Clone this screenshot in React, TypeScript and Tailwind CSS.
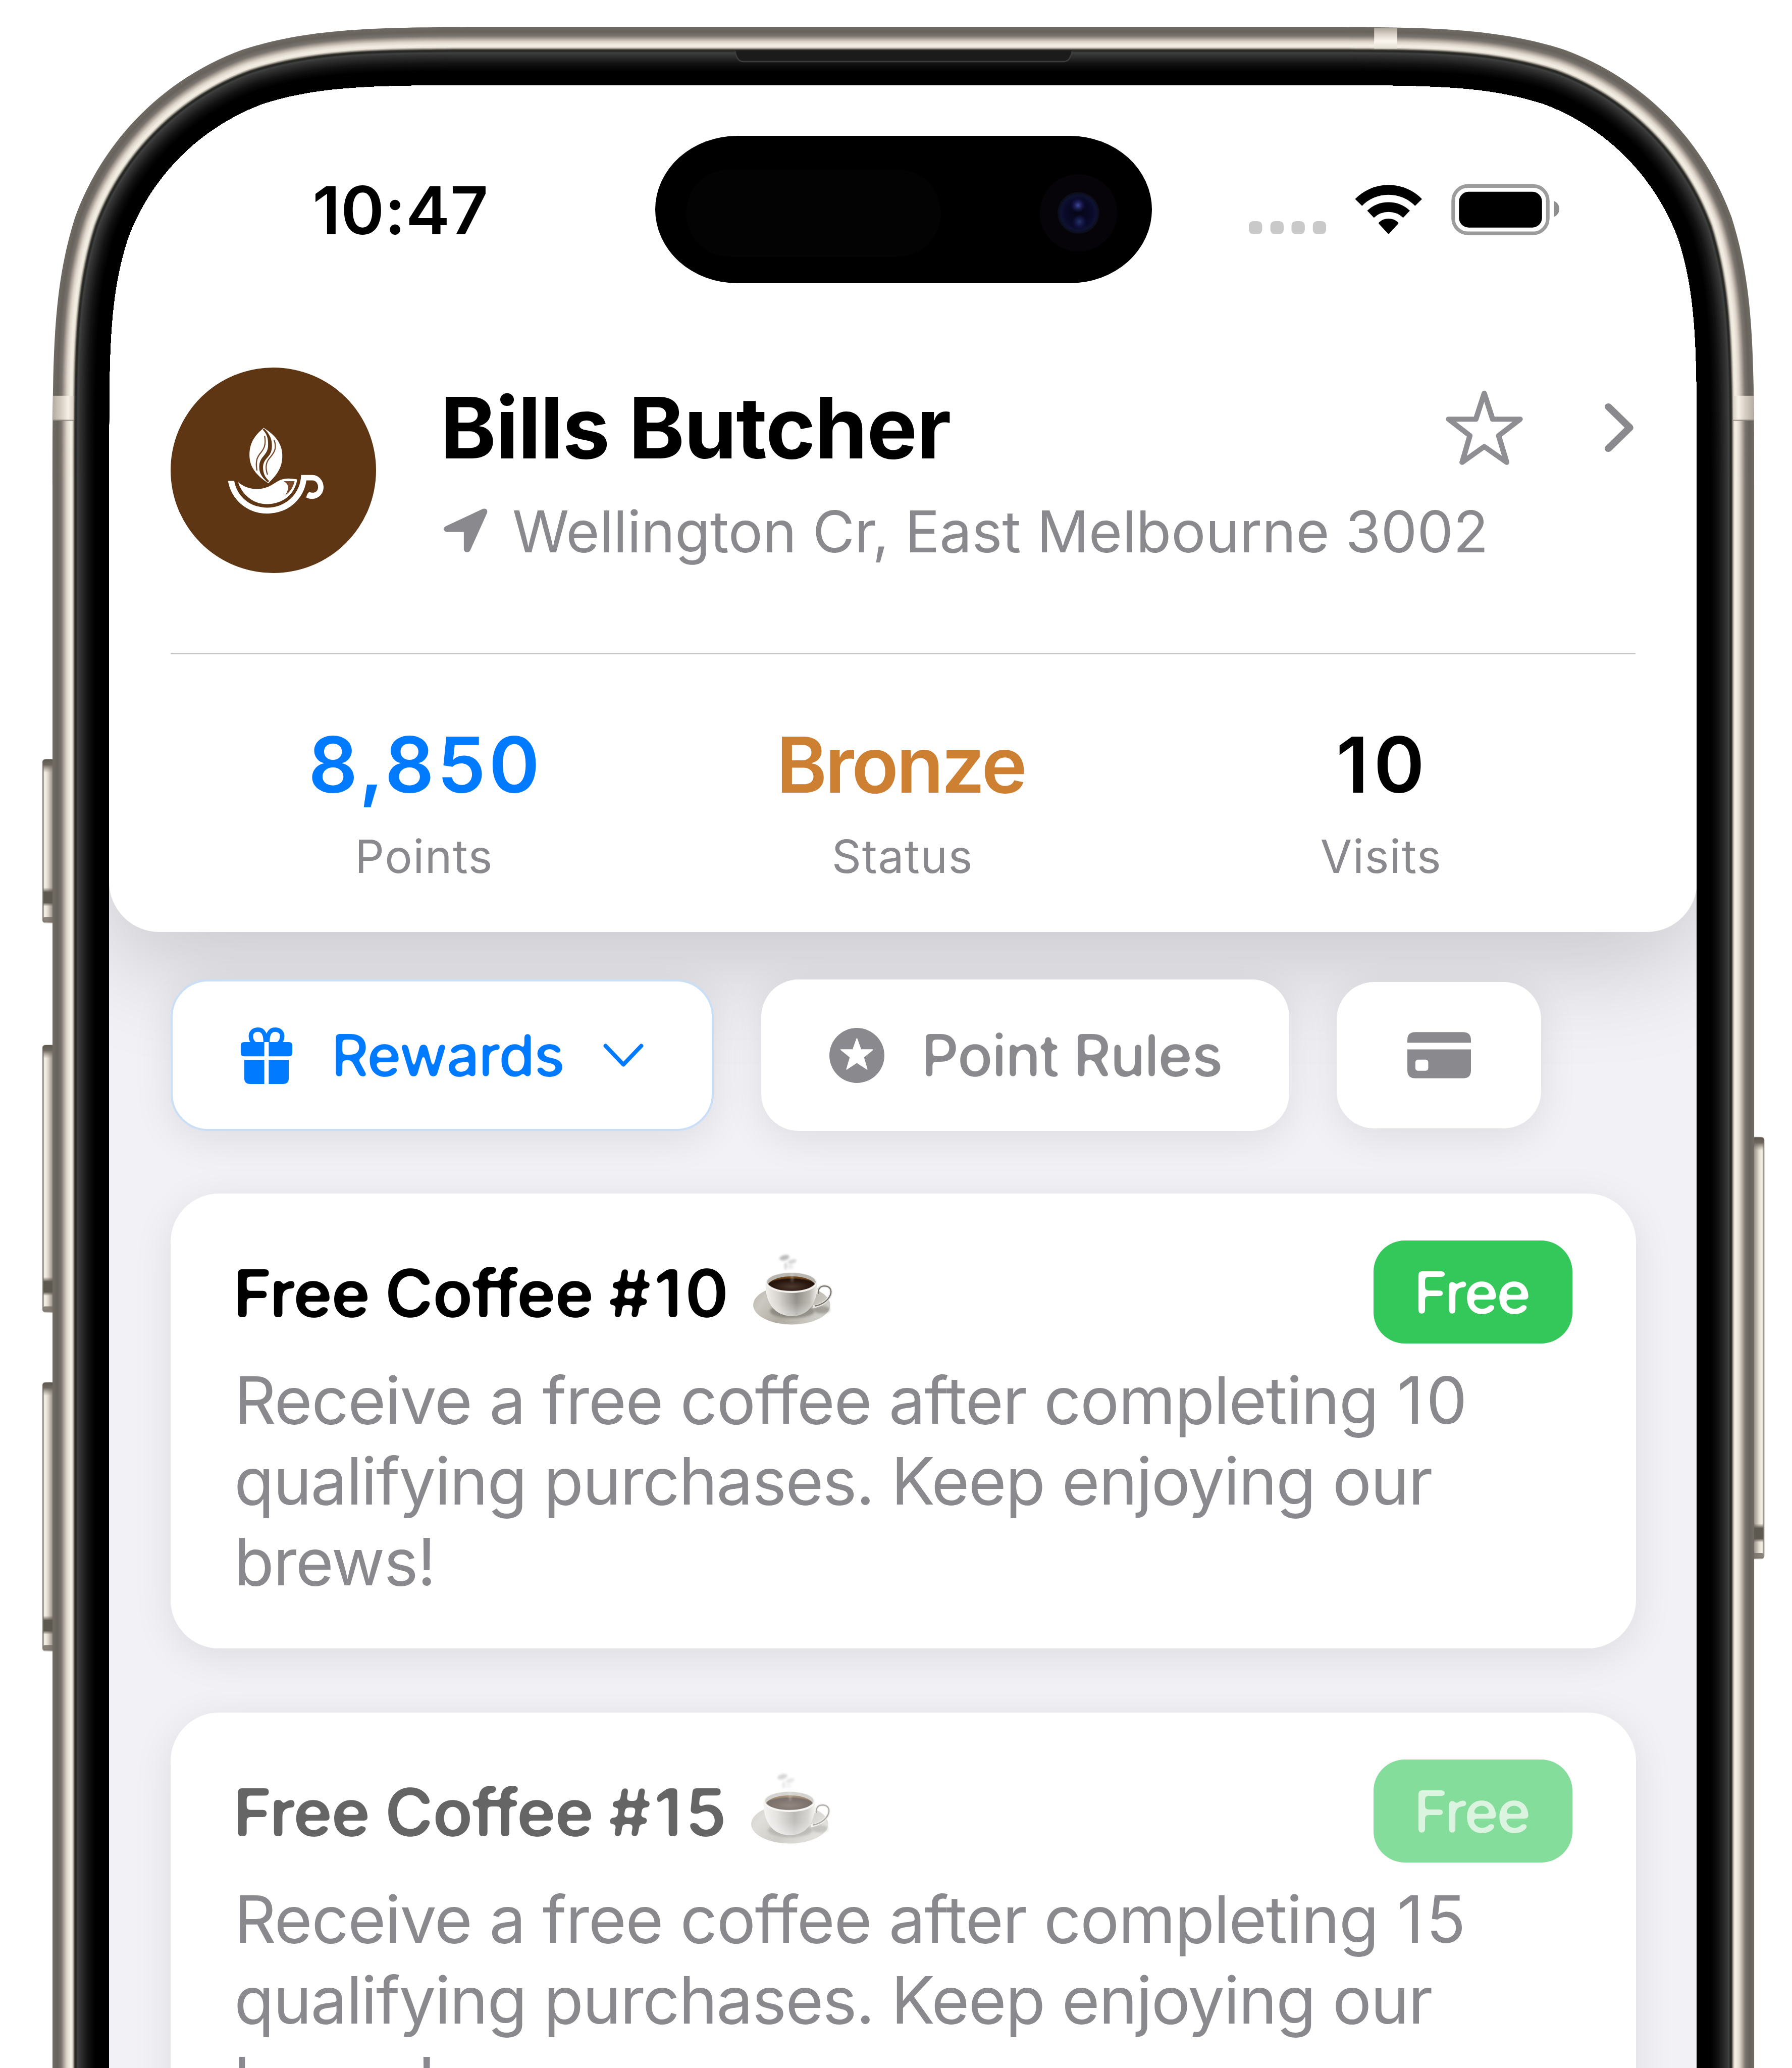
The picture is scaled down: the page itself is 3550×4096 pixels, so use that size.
import React from "react";

type Box = { l: number; t: number; r: number };

/** Rounded-top outline with continuous corner curvature, open past the bottom edge. */
function shell({ l, t, r }: Box, rad: number) {
  const n = (v: number) => v.toFixed(2);
  const a = 1.528665 * rad, b = 1.08849 * rad, c = 0.86841 * rad, d = 0.63149 * rad;
  const e = 0.07491 * rad, f = 0.37282 * rad, g = 0.16906 * rad;
  return [
    `M${n(l)} 4800`,
    `V${n(t + a)}`,
    `C${n(l)} ${n(t + b)} ${n(l)} ${n(t + c)} ${n(l + e)} ${n(t + d)}`,
    `C${n(l + g)} ${n(t + f)} ${n(l + f)} ${n(t + g)} ${n(l + d)} ${n(t + e)}`,
    `C${n(l + c)} ${n(t)} ${n(l + b)} ${n(t)} ${n(l + a)} ${n(t)}`,
    `H${n(r - a)}`,
    `C${n(r - b)} ${n(t)} ${n(r - c)} ${n(t)} ${n(r - d)} ${n(t + e)}`,
    `C${n(r - f)} ${n(t + g)} ${n(r - g)} ${n(t + f)} ${n(r - e)} ${n(t + d)}`,
    `C${n(r)} ${n(t + c)} ${n(r)} ${n(t + b)} ${n(r)} ${n(t + a)}`,
    `V4800Z`,
  ].join(" ");
}

const OUTER: Box = { l: 118, t: 60.5, r: 3942 };
const INNER: Box = { l: 245, t: 191, r: 3813.5 };
const HOLE = shell(INNER, 550);

/** Colour stops across the rim, from the outside in (0..1). */
const STOPS: [number, number[]][] = [
  [0, [112, 107, 100]],
  [0.08, [104, 99, 92]],
  [0.15, [122, 116, 110]],
  [0.2, [176, 166, 157]],
  [0.25, [222, 213, 202]],
  [0.31, [243, 238, 228]],
  [0.345, [236, 230, 219]],
  [0.37, [150, 145, 136]],
  [0.39, [52, 51, 47]],
  [0.41, [36, 36, 33]],
  [0.44, [64, 66, 66]],
  [0.47, [54, 54, 54]],
  [0.54, [38, 38, 38]],
  [0.62, [20, 20, 20]],
  [0.7, [8, 8, 8]],
  [0.77, [0, 0, 0]],
  [1, [0, 0, 0]],
];

function tone(u: number) {
  let i = 0;
  while (i < STOPS.length - 2 && STOPS[i + 1][0] < u) i++;
  const [p, a] = STOPS[i];
  const [q, b] = STOPS[i + 1];
  const k = (u - p) / (q - p);
  return `rgb(${a.map((v, j) => Math.round(v + (b[j] - v) * k)).join(",")})`;
}

const mix = (a: number, b: number, u: number) => a + (b - a) * u;
const LAYERS = Array.from({ length: 101 }, (_, i) => {
  const u = i / 128;
  return {
    fill: tone(u),
    d: `${shell(
      { l: mix(OUTER.l, INNER.l, u), t: mix(OUTER.t, INNER.t, u), r: mix(OUTER.r, INNER.r, u) },
      mix(677, 550, u),
    )} ${HOLE}`,
  };
});

function SideButton({ x, y, h, flip }: { x: number; y: number; h: number; flip?: boolean }) {
  return (
    <g transform={flip ? `translate(${2 * x + 26} 0) scale(-1 1)` : undefined}>
      <rect x={x} y={y} width="30" height={h} rx="7" fill="url(#btnEdge)" />
      <rect x={x + 4} y={y + 5} width="20" height={h - 10} fill="url(#btnCore)" />
      <rect x={x + 1} y={y + 1} width="25" height="30" rx="6" fill="url(#btnCap)" />
      <rect x={x + 2} y={y + h - 80} width="24" height="42" fill="url(#btnNotch)" />
      <rect x={x + 2} y={y + h - 14} width="24" height="12" rx="4" fill="#756f67" opacity=".85" />
    </g>
  );
}

function Bezel() {
  return (
    <svg viewBox="0 0 4027 4646" className="pointer-events-none absolute inset-0 z-30 h-[4096px] w-[3550px]">
      <defs>
        <linearGradient id="btnEdge">
          <stop offset="0" stopColor="#8d8982" />
          <stop offset=".25" stopColor="#c9c3b9" />
          <stop offset="1" stopColor="#8a837b" />
        </linearGradient>
        <linearGradient id="btnCore">
          <stop offset="0" stopColor="#fbf7ef" />
          <stop offset=".4" stopColor="#e3dbd0" />
          <stop offset="1" stopColor="#958d84" />
        </linearGradient>
        <linearGradient id="btnCap" x1="0" y1="0" x2="0" y2="1">
          <stop offset="0" stopColor="#5d5850" />
          <stop offset=".4" stopColor="#6d675f" />
          <stop offset="1" stopColor="#8d867d" stopOpacity="0" />
        </linearGradient>
        <linearGradient id="btnNotch" x1="0" y1="0" x2="0" y2="1">
          <stop offset="0" stopColor="#5d5850" stopOpacity="0" />
          <stop offset=".25" stopColor="#5d5850" />
          <stop offset=".8" stopColor="#5d5850" />
          <stop offset="1" stopColor="#5d5850" stopOpacity="0" />
        </linearGradient>
        <linearGradient id="seam">
          <stop offset="0" stopColor="#b5aca2" />
          <stop offset=".4" stopColor="#d5ccc2" />
          <stop offset=".75" stopColor="#f6f1e7" />
          <stop offset="1" stopColor="#d9d3c8" />
        </linearGradient>
        <linearGradient id="seamTop" x1="0" y1="0" x2="0" y2="1">
          <stop offset="0" stopColor="#a9a096" />
          <stop offset=".3" stopColor="#d8cfc6" />
          <stop offset=".65" stopColor="#fbf6ee" />
          <stop offset="1" stopColor="#e5dfd4" />
        </linearGradient>
      </defs>
      <SideButton x={95} y={1705} h={369} />
      <SideButton x={95} y={2347} h={602} />
      <SideButton x={95} y={3105} h={605} />
      <SideButton x={3939} y={2554} h={949} flip />
      {LAYERS.map((p, i) => (
        <path key={i} d={p.d} fill={p.fill} fillRule="evenodd" />
      ))}
      <rect x="119" y="889" width="46" height="54" fill="url(#seam)" />
      <path d="M119 944H166" stroke="#8d867d" strokeWidth="2" />
      <rect x="-3941" y="889" width="46" height="54" fill="url(#seam)" transform="scale(-1 1)" />
      <path d="M3894 944H3941" stroke="#8d867d" strokeWidth="2" />
      <rect x="3088" y="62" width="52" height="47" fill="url(#seamTop)" />
      <path d="M1652 113Q1656 138 1670 138H2391Q2405 138 2409 113Z" fill="#1b1b1b" />
      <path d="M1652 115Q1656 138 1670 138H2391Q2405 138 2409 115" fill="none" stroke="#3c3c3c" strokeWidth="3" />
    </svg>
  );
}

/** Softens glyph corners so Inter reads as a rounded face. */
function RoundedFaceFilter() {
  return (
    <svg className="absolute size-0">
      <filter id="rounded" x="-5%" y="-10%" width="110%" height="120%" colorInterpolationFilters="sRGB">
        <feGaussianBlur stdDeviation="3.6" />
        <feComponentTransfer>
          <feFuncA type="linear" slope="9" intercept="-4" />
        </feComponentTransfer>
      </filter>
    </svg>
  );
}

function Island() {
  return (
    <svg viewBox="1472 305 1116 331" className="h-[292px] w-[984px]">
      <defs>
        <radialGradient id="lens">
          <stop offset="0" stopColor="#060614" />
          <stop offset=".65" stopColor="#09092a" />
          <stop offset=".85" stopColor="#0f1230" />
          <stop offset="1" stopColor="#0a0c14" />
        </radialGradient>
        <radialGradient id="glintA">
          <stop offset="0" stopColor="#414b9c" />
          <stop offset="1" stopColor="#1a1a60" stopOpacity="0" />
        </radialGradient>
        <radialGradient id="glintB">
          <stop offset="0" stopColor="#243668" />
          <stop offset="1" stopColor="#1a1a60" stopOpacity="0" />
        </radialGradient>
      </defs>
      <rect x="1472" y="305" width="1116" height="331" rx="184" ry="165.5" fill="#000" />
      <rect x="1541" y="380" width="573" height="197" rx="98" fill="#030303" />
      <circle cx="2423" cy="478" r="87" fill="#060408" />
      <circle cx="2423" cy="478" r="47" fill="url(#lens)" />
      <circle cx="2422" cy="461" r="17" fill="url(#glintA)" />
      <circle cx="2425" cy="498" r="17" fill="url(#glintB)" />
    </svg>
  );
}

function Signals() {
  return (
    <svg viewBox="2800 430 720 150" className="h-[132px] w-[635px]">
      {[2806, 2854.5, 2902, 2950].map((x) => (
        <rect key={x} x={x} y="531" width="30" height="29.500" rx="10" fill="#c9c9c9" />
      ))}
      <g fill="none" stroke="#000" strokeWidth="22">
        <path d="M3053 489A94.500 94.500 0 0 1 3188 489" />
        <path d="M3080 515.500A59 59 0 0 1 3161 515.500" />
      </g>
      <path d="M3099 537.500Q3097 535.500 3099 534A31 31 0 0 1 3142 534Q3144 535.500 3142 537.500L3122.500 558.500Q3120.500 560.500 3118.500 558.500Z" />
      <rect x="3266" y="452" width="213" height="106.500" rx="33" fill="none" stroke="#9c9c9c" strokeWidth="8" />
      <rect x="3279" y="465" width="187" height="80.500" rx="22" />
      <path d="M3493 486Q3505 491 3505 503.500Q3505 516 3493 521.500Z" fill="#8e8e8e" />
    </svg>
  );
}

function Logo() {
  return (
    <svg viewBox="70 75 1389 1389" className="mt-[1px] size-[407px] shrink-0">
      <circle cx="764.5" cy="769.5" r="694.5" fill="#5e3613" />
      <path d="M700 483C790 540 825 600 825 672C825 745 795 795 730 857C645 800 603 745 603 665C603 590 635 535 700 483Z" fill="#fff" />
      <path d="M692 494L702 487C745 530 756 565 755 605C754 690 695 680 695 752C695 790 710 820 736 842L727 852C690 820 668 790 669 745C671 672 729 670 729 600C730 555 722 525 692 494Z" fill="#5e3613" />
      <g fill="none" stroke="#7a4a2a" strokeWidth="8" strokeLinecap="round">
        <path d="M706 541C716 600 700 625 680 650C655 680 643 705 653 768" />
        <path d="M770 566C790 620 770 650 745 680C715 712 708 745 724 796" />
      </g>
      <path d="M458 841H500C520 950 610 1022 723 1022C850 1022 950 925 952 801H1030C1070 801 1104 840 1104 882C1104 930 1068 963 1025 963Q1005 963 987 954Q990 930 1007 915C1040 930 1067 915 1067 882C1067 858 1050 838 1030 838H988C970 965 865 1062 723 1062C590 1062 480 970 458 841Z" fill="#fff" />
      <path d="M526 850C600 910 690 910 765 862C820 825 850 818 926 832C910 930 830 998 723 998C630 998 555 940 526 850Z" fill="#fff" />
      <path d="M834 843H908C900 880 880 915 845 939C875 890 870 865 834 843Z" fill="#7a4a2a" />
    </svg>
  );
}

function Header() {
  return (
    <div className="flex h-[566px] px-[122px]">
      <Logo />
      <div className="ml-[130px] flex-1">
        <div className="flex items-center justify-between">
          <div className="mt-[18px] ml-[-3px] text-[168px] leading-[204px] font-bold tracking-[-1.4px]">Bills Butcher</div>
          <div className="mt-[18px] flex items-center gap-[160px] pr-[2px]">
            <svg viewBox="185 110 495 505" preserveAspectRatio="none" className="h-[149px] w-[155px]" fill="none" stroke="#8e8e93" strokeWidth="34" strokeLinejoin="round">
              <path d="M432 130L485 304H659L523 415L574 594L432 488L292 594L341 415L206 304H379Z" />
            </svg>
            <svg viewBox="1188 195 190 332" preserveAspectRatio="none" className="h-[98px] w-[60px]" fill="none" stroke="#8a8a8e" strokeWidth="46" strokeLinecap="round" strokeLinejoin="round">
              <path d="M1214 221L1348 361L1214 501" />
            </svg>
          </div>
        </div>
        <div className="mt-[34px] flex items-center text-[114px] leading-[140px] tracking-[-0.2px] text-[#8a8a8e]">
          <svg viewBox="110 126 299 299" className="mt-[-6px] mr-[49px] ml-[4px] size-[87px]">
            <path d="M377 129Q407 121 407 153L291 410Q284 424 268 424Q248 421 247 404V287H134Q112 285 111 266Q112 252 126 246Z" fill="#8a8a8e" />
          </svg>
          <span>Wellington Cr, East Melbourne 3002</span>
        </div>
      </div>
    </div>
  );
}

function Stat({ value, label, color }: { value: string; label: string; color: string }) {
  return (
    <div className="flex flex-1 flex-col items-center">
      <div className={`text-[153px] leading-[186px] font-semibold ${color}`}>{value}</div>
      <div className="mt-[32px] text-[91px] leading-[112px] tracking-[1.5px] text-[#8a8a8e]">{label}</div>
    </div>
  );
}

function Tabs() {
  return (
    <div className="relative z-20 mt-[94px] flex items-center gap-[94px] px-[122px] text-[116px] leading-[140px] font-medium">
      <div className="flex h-[300px] w-[1076px] items-center rounded-[74px] border-[4px] border-[#c9def7] bg-white pl-[134px] text-[#007aff] shadow-[0_16px_80px_rgba(0,0,0,0.09)]">
        <svg viewBox="0 0 118 128" className="h-[113px] w-[104px]" fill="#007aff">
          <path d="M57 34C57 18 52 6 40 6C20 6 20 28 32 38M61 34C61 18 66 6 78 6C98 6 98 28 86 38" fill="none" stroke="#007aff" strokeWidth="10" />
          <path d="M9 34H54V66H9Q1 66 1 58V42Q1 34 9 34ZM64 34H109Q117 34 117 42V58Q117 66 109 66H64ZM9 74H54V128H22Q9 128 9 115ZM64 74H109V115Q109 128 96 128H64Z" />
        </svg>
        <span className="ml-[76px] tracking-[-2.5px] filter-[url(#rounded)]">Rewards</span>
        <svg viewBox="0 0 90 52" className="ml-[78px] h-[46px] w-[80px]" fill="none" stroke="#007aff" strokeWidth="9" strokeLinecap="round" strokeLinejoin="round">
          <path d="M5 5L45 47L85 5" />
        </svg>
      </div>
      <div className="flex h-[300px] w-[1046px] items-center rounded-[74px] bg-white pl-[135px] text-[#8a8a8e] shadow-[0_16px_80px_rgba(0,0,0,0.09)]">
        <svg viewBox="0 0 124 124" className="size-[109px]">
          <circle cx="62" cy="62" r="62" fill="#8a8a8e" />
          <path d="M62 24L71 49H98L77 66L85 93L62 78L39 93L47 66L26 49H53Z" fill="#fff" stroke="#fff" strokeWidth="2" strokeLinejoin="round" />
        </svg>
        <span className="ml-[73px] tracking-[-2px] filter-[url(#rounded)]">Point Rules</span>
      </div>
      <div className="flex h-[290px] w-[405px] items-center justify-center rounded-[74px] bg-white shadow-[0_16px_80px_rgba(0,0,0,0.09)]">
        <svg viewBox="0 0 143 104" className="h-[92px] w-[126px]">
          <path d="M18 0H125Q143 0 143 18V24H0V18Q0 0 18 0ZM0 39H143V86Q143 104 125 104H18Q0 104 0 86Z" fill="#8a8a8e" />
          <rect x="18" y="62" width="29" height="25" rx="6" fill="#fff" />
        </svg>
      </div>
    </div>
  );
}

function Cup() {
  return (
    <svg viewBox="150 110 545 490" className="h-[144px] w-[160px]">
      <defs>
        <linearGradient id="plate" x1="0" y1="0" x2="1" y2=".4">
          <stop offset="0" stopColor="#b9b5ad" />
          <stop offset=".25" stopColor="#cbc8c1" />
          <stop offset=".6" stopColor="#b0aca2" />
          <stop offset="1" stopColor="#cfcdc8" />
        </linearGradient>
        <linearGradient id="body">
          <stop offset="0" stopColor="#f2f0ed" />
          <stop offset=".25" stopColor="#d2cec8" />
          <stop offset=".6" stopColor="#86827c" />
          <stop offset=".85" stopColor="#b5b1aa" />
          <stop offset="1" stopColor="#f1efec" />
        </linearGradient>
        <linearGradient id="bodyLight" x1="0" y1="0" x2="0" y2="1">
          <stop offset="0" stopColor="#fff" stopOpacity="0" />
          <stop offset=".6" stopColor="#fff" stopOpacity=".15" />
          <stop offset="1" stopColor="#fff" stopOpacity=".55" />
        </linearGradient>
        <radialGradient id="brew" cx=".5" cy=".7" r=".6">
          <stop offset="0" stopColor="#4e382d" />
          <stop offset=".6" stopColor="#2c1a12" />
          <stop offset=".85" stopColor="#24130b" />
          <stop offset="1" stopColor="#6b441c" />
        </radialGradient>
        <filter id="steam" x="-50%" y="-50%" width="200%" height="200%">
          <feGaussianBlur stdDeviation="8" />
        </filter>
        <filter id="soft" x="-20%" y="-50%" width="140%" height="200%">
          <feGaussianBlur stdDeviation="8" />
        </filter>
      </defs>
      <ellipse cx="417" cy="463" rx="260" ry="132" fill="url(#plate)" />
      <ellipse cx="420" cy="505" rx="150" ry="46" fill="#6d6a62" opacity=".55" filter="url(#soft)" />
      <ellipse cx="620" cy="495" rx="55" ry="26" fill="#6d6a62" opacity=".45" filter="url(#soft)" />
      <path d="M590 390C590 350 610 335 640 335C675 335 690 365 678 395C662 435 620 465 560 475" fill="none" stroke="#e9e7e3" strokeWidth="20" />
      <path d="M596 388C594 350 612 335 640 335C676 336 690 365 678 395C662 435 620 462 572 470" fill="none" stroke="#77736d" strokeWidth="8" />
      <path d="M240 318C240 470 320 538 418 538C515 538 590 470 590 318Z" fill="url(#body)" />
      <path d="M240 318C240 470 320 538 418 538C515 538 590 470 590 318Z" fill="url(#bodyLight)" />
      <ellipse cx="415" cy="312" rx="174" ry="70" fill="#f3f1ee" />
      <ellipse cx="415" cy="308" rx="164" ry="62" fill="#bab7b0" />
      <path d="M258 322C280 290 340 270 416 270C495 270 555 292 573 322C545 352 490 368 416 368C340 368 285 352 258 322Z" fill="url(#brew)" />
      <g filter="url(#steam)" fill="#77777a">
        <ellipse cx="368" cy="144" rx="34" ry="17" opacity=".5" transform="rotate(-15 368 144)" />
        <ellipse cx="376" cy="200" rx="9" ry="26" opacity=".3" />
        <ellipse cx="420" cy="170" rx="30" ry="14" opacity=".3" transform="rotate(-15 420 170)" />
        <ellipse cx="408" cy="205" rx="20" ry="16" opacity=".15" />
        <ellipse cx="420" cy="275" rx="8" ry="35" fill="#fff" opacity=".3" />
      </g>
    </svg>
  );
}

function Reward({ n, dim }: { n: number; dim?: boolean }) {
  return (
    <div className="h-[901px] shrink-0 rounded-[96px] bg-white px-[126px] pt-[93px] shadow-[0_16px_80px_rgba(0,0,0,0.09)]">
      <div className={`flex h-[204px] items-center ${dim ? "opacity-60" : ""}`}>
        <div className="mt-[6px] ml-[-2px] text-[131px] leading-[150px] font-semibold tracking-[-2.1px] whitespace-nowrap filter-[url(#rounded)]">
          Free Coffee <span className="tracking-[6px]">#{n}</span>
        </div>
        <div className="mt-[-12px] ml-[40px]">
          <Cup />
        </div>
        <div className="ml-auto flex h-[204px] w-[394px] items-center justify-center rounded-[62px] bg-[#34c759] text-[116px] leading-[140px] font-medium tracking-[-4px] text-white">
          <span className={`mt-[2px] mr-[6px] filter-[url(#rounded)] ${dim ? "opacity-70" : ""}`}>Free</span>
        </div>
      </div>
      <div className="mt-[32px] text-[129px] leading-[160px] tracking-[-1.85px] whitespace-nowrap text-[#8a8a8e]">
        <span className="tracking-[-1.6px]">Receive a free coffee after completing </span>
        <span className="ml-[3px] tracking-[5px]">{n}</span>
        <br />
        qualifying purchases. Keep enjoying our
        <br />
        brews!
      </div>
    </div>
  );
}

export default function App() {
  return (
    <div className="relative h-[4096px] w-[3550px] overflow-hidden bg-white font-['Inter',sans-serif] text-black">
      <RoundedFaceFilter />
      <div className="relative mt-[168px] ml-[216px] flex h-[3928px] w-[3146px] flex-col overflow-hidden rounded-t-[400px] bg-[#f1f1f6]">
        <div className="relative z-10 h-[1678px] shrink-0 rounded-b-[100px] bg-white pt-[101px] shadow-[0_60px_210px_rgba(0,0,0,0.18)]">
          <div className="flex h-[292px] items-center">
            <div className="mt-[4px] w-[1082px] pl-[403px] text-[131px] leading-[160px] font-semibold tracking-[0.5px]">10:47</div>
            <Island />
            <div className="ml-[186px] flex">
              <Signals />
            </div>
          </div>
          <div className="mt-[166px]">
            <Header />
          </div>
          <div className="mx-[122px] h-[3px] bg-[#c6c6c8]" />
          <div className="mt-[126px] flex pr-[152px] pl-[150px]">
            <Stat value="8,850" label="Points" color="text-[#007aff] tracking-[6px] pl-[6px]" />
            <Stat value="Bronze" label="Status" color="text-[#cd7f32] tracking-[-4.5px] pr-[8px]" />
            <Stat value="10" label="Visits" color="text-black tracking-[10px] pl-[7px]" />
          </div>
        </div>
        <Tabs />
        <div className="mt-[124px] flex shrink-0 flex-col gap-[127px] pr-[121px] pl-[122px]">
          <Reward n={10} />
          <Reward n={15} dim />
        </div>
      </div>
      <Bezel />
    </div>
  );
}
